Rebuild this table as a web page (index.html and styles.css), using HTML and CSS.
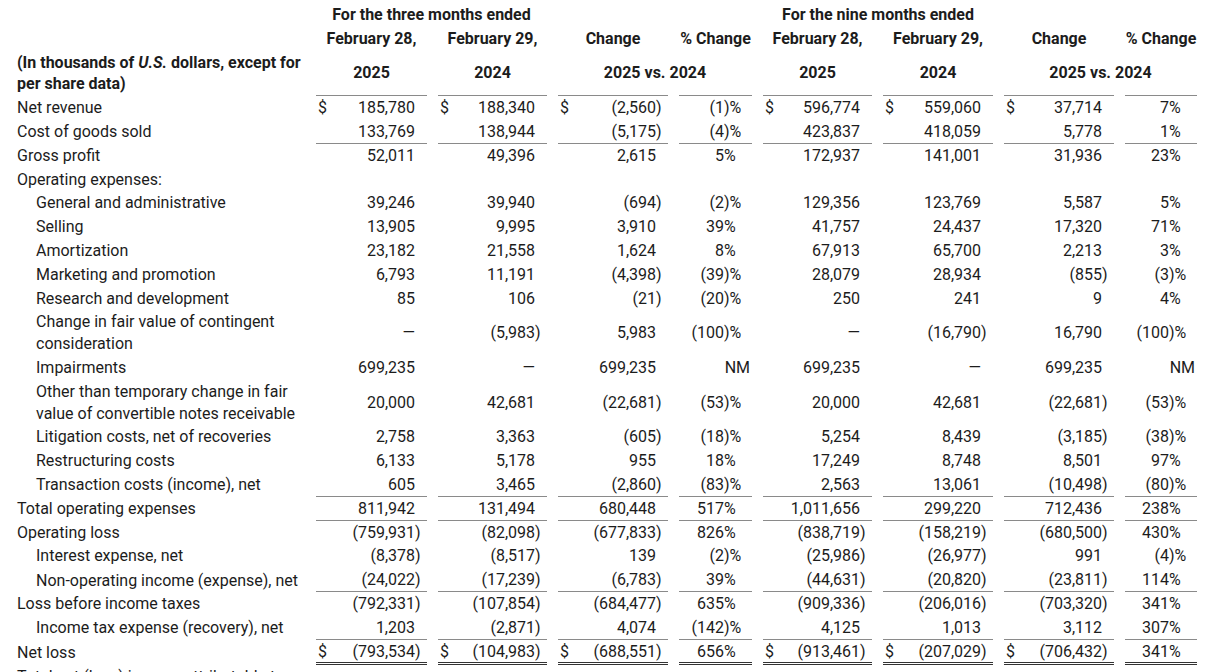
FILE: index.html
```html
<!DOCTYPE html>
<html lang="en">
<head>
  <meta charset="UTF-8">
  <title>Consolidated Statements of Loss</title>
  <link rel="stylesheet" href="styles.css">
</head>
<body>
  <table class="fin">
    <colgroup>
      <col class="c-label">
      <col class="c-val"><col class="c-val2"><col class="c-val3"><col class="c-pct">
      <col class="c-val5"><col class="c-val3"><col class="c-val3"><col class="c-pct8">
    </colgroup>
    <thead>
      <tr>
        <th></th>
        <th colspan="2">For the three months ended</th>
        <th></th><th></th>
        <th colspan="2">For the nine months ended</th>
        <th></th><th></th>
      </tr>
      <tr>
        <th></th>
        <th>February 28,</th><th>February 29,</th><th>Change</th><th>% Change</th>
        <th>February 28,</th><th>February 29,</th><th>Change</th><th>% Change</th>
      </tr>
      <tr class="yr">
        <th class="lbl">(In thousands of <i>U.S.</i> dollars, except for per share data)</th>
        <th class="ul">2025</th><th class="ul">2024</th><th colspan="2" class="ul-split">2025 vs. 2024</th>
        <th class="ul">2025</th><th class="ul">2024</th><th colspan="2" class="ul-split">2025 vs. 2024</th>
      </tr>
    </thead>
    <tbody>
      <tr>
        <td class="lbl">Net revenue</td>
        <td class="num"><span class="cur">$</span>185,780</td>
        <td class="num"><span class="cur">$</span>188,340</td>
        <td class="num"><span class="cur">$</span>(2,560<span class="cp">)</span></td>
        <td class="pct">(1<span class="sfx">)%</span></td>
        <td class="num"><span class="cur">$</span>596,774</td>
        <td class="num"><span class="cur">$</span>559,060</td>
        <td class="num"><span class="cur">$</span>37,714</td>
        <td class="pct">7<span class="sfx">%</span></td>
      </tr>
      <tr class="rule">
        <td class="lbl">Cost of goods sold</td>
        <td class="num">133,769</td>
        <td class="num">138,944</td>
        <td class="num">(5,175<span class="cp">)</span></td>
        <td class="pct">(4<span class="sfx">)%</span></td>
        <td class="num">423,837</td>
        <td class="num">418,059</td>
        <td class="num">5,778</td>
        <td class="pct">1<span class="sfx">%</span></td>
      </tr>
      <tr>
        <td class="lbl">Gross profit</td>
        <td class="num">52,011</td>
        <td class="num">49,396</td>
        <td class="num">2,615</td>
        <td class="pct">5<span class="sfx">%</span></td>
        <td class="num">172,937</td>
        <td class="num">141,001</td>
        <td class="num">31,936</td>
        <td class="pct">23<span class="sfx">%</span></td>
      </tr>
      <tr>
        <td class="lbl">Operating expenses:</td>
        <td></td><td></td><td></td><td></td><td></td><td></td><td></td><td></td>
      </tr>
      <tr>
        <td class="lbl ind">General and administrative</td>
        <td class="num">39,246</td>
        <td class="num">39,940</td>
        <td class="num">(694<span class="cp">)</span></td>
        <td class="pct">(2<span class="sfx">)%</span></td>
        <td class="num">129,356</td>
        <td class="num">123,769</td>
        <td class="num">5,587</td>
        <td class="pct">5<span class="sfx">%</span></td>
      </tr>
      <tr>
        <td class="lbl ind">Selling</td>
        <td class="num">13,905</td>
        <td class="num">9,995</td>
        <td class="num">3,910</td>
        <td class="pct">39<span class="sfx">%</span></td>
        <td class="num">41,757</td>
        <td class="num">24,437</td>
        <td class="num">17,320</td>
        <td class="pct">71<span class="sfx">%</span></td>
      </tr>
      <tr>
        <td class="lbl ind">Amortization</td>
        <td class="num">23,182</td>
        <td class="num">21,558</td>
        <td class="num">1,624</td>
        <td class="pct">8<span class="sfx">%</span></td>
        <td class="num">67,913</td>
        <td class="num">65,700</td>
        <td class="num">2,213</td>
        <td class="pct">3<span class="sfx">%</span></td>
      </tr>
      <tr>
        <td class="lbl ind">Marketing and promotion</td>
        <td class="num">6,793</td>
        <td class="num">11,191</td>
        <td class="num">(4,398<span class="cp">)</span></td>
        <td class="pct">(39<span class="sfx">)%</span></td>
        <td class="num">28,079</td>
        <td class="num">28,934</td>
        <td class="num">(855<span class="cp">)</span></td>
        <td class="pct">(3<span class="sfx">)%</span></td>
      </tr>
      <tr>
        <td class="lbl ind">Research and development</td>
        <td class="num">85</td>
        <td class="num">106</td>
        <td class="num">(21<span class="cp">)</span></td>
        <td class="pct">(20<span class="sfx">)%</span></td>
        <td class="num">250</td>
        <td class="num">241</td>
        <td class="num">9</td>
        <td class="pct">4<span class="sfx">%</span></td>
      </tr>
      <tr>
        <td class="lbl ind">Change in fair value of contingent consideration</td>
        <td class="num">&mdash;</td>
        <td class="num">(5,983<span class="cp">)</span></td>
        <td class="num">5,983</td>
        <td class="pct">(100<span class="sfx">)%</span></td>
        <td class="num">&mdash;</td>
        <td class="num">(16,790<span class="cp">)</span></td>
        <td class="num">16,790</td>
        <td class="pct">(100<span class="sfx">)%</span></td>
      </tr>
      <tr>
        <td class="lbl ind">Impairments</td>
        <td class="num">699,235</td>
        <td class="num">&mdash;</td>
        <td class="num">699,235</td>
        <td class="pct nm">NM</td>
        <td class="num">699,235</td>
        <td class="num">&mdash;</td>
        <td class="num">699,235</td>
        <td class="pct nm">NM</td>
      </tr>
      <tr>
        <td class="lbl ind">Other than temporary change in fair value of convertible notes receivable</td>
        <td class="num">20,000</td>
        <td class="num">42,681</td>
        <td class="num">(22,681<span class="cp">)</span></td>
        <td class="pct">(53<span class="sfx">)%</span></td>
        <td class="num">20,000</td>
        <td class="num">42,681</td>
        <td class="num">(22,681<span class="cp">)</span></td>
        <td class="pct">(53<span class="sfx">)%</span></td>
      </tr>
      <tr>
        <td class="lbl ind">Litigation costs, net of recoveries</td>
        <td class="num">2,758</td>
        <td class="num">3,363</td>
        <td class="num">(605<span class="cp">)</span></td>
        <td class="pct">(18<span class="sfx">)%</span></td>
        <td class="num">5,254</td>
        <td class="num">8,439</td>
        <td class="num">(3,185<span class="cp">)</span></td>
        <td class="pct">(38<span class="sfx">)%</span></td>
      </tr>
      <tr>
        <td class="lbl ind">Restructuring costs</td>
        <td class="num">6,133</td>
        <td class="num">5,178</td>
        <td class="num">955</td>
        <td class="pct">18<span class="sfx">%</span></td>
        <td class="num">17,249</td>
        <td class="num">8,748</td>
        <td class="num">8,501</td>
        <td class="pct">97<span class="sfx">%</span></td>
      </tr>
      <tr class="rule">
        <td class="lbl ind">Transaction costs (income), net</td>
        <td class="num">605</td>
        <td class="num">3,465</td>
        <td class="num">(2,860<span class="cp">)</span></td>
        <td class="pct">(83<span class="sfx">)%</span></td>
        <td class="num">2,563</td>
        <td class="num">13,061</td>
        <td class="num">(10,498<span class="cp">)</span></td>
        <td class="pct">(80<span class="sfx">)%</span></td>
      </tr>
      <tr class="rule">
        <td class="lbl">Total operating expenses</td>
        <td class="num">811,942</td>
        <td class="num">131,494</td>
        <td class="num">680,448</td>
        <td class="pct">517<span class="sfx">%</span></td>
        <td class="num">1,011,656</td>
        <td class="num">299,220</td>
        <td class="num">712,436</td>
        <td class="pct">238<span class="sfx">%</span></td>
      </tr>
      <tr>
        <td class="lbl">Operating loss</td>
        <td class="num">(759,931<span class="cp">)</span></td>
        <td class="num">(82,098<span class="cp">)</span></td>
        <td class="num">(677,833<span class="cp">)</span></td>
        <td class="pct">826<span class="sfx">%</span></td>
        <td class="num">(838,719<span class="cp">)</span></td>
        <td class="num">(158,219<span class="cp">)</span></td>
        <td class="num">(680,500<span class="cp">)</span></td>
        <td class="pct">430<span class="sfx">%</span></td>
      </tr>
      <tr>
        <td class="lbl ind">Interest expense, net</td>
        <td class="num">(8,378<span class="cp">)</span></td>
        <td class="num">(8,517<span class="cp">)</span></td>
        <td class="num">139</td>
        <td class="pct">(2<span class="sfx">)%</span></td>
        <td class="num">(25,986<span class="cp">)</span></td>
        <td class="num">(26,977<span class="cp">)</span></td>
        <td class="num">991</td>
        <td class="pct">(4<span class="sfx">)%</span></td>
      </tr>
      <tr class="rule">
        <td class="lbl ind">Non-operating income (expense), net</td>
        <td class="num">(24,022<span class="cp">)</span></td>
        <td class="num">(17,239<span class="cp">)</span></td>
        <td class="num">(6,783<span class="cp">)</span></td>
        <td class="pct">39<span class="sfx">%</span></td>
        <td class="num">(44,631<span class="cp">)</span></td>
        <td class="num">(20,820<span class="cp">)</span></td>
        <td class="num">(23,811<span class="cp">)</span></td>
        <td class="pct">114<span class="sfx">%</span></td>
      </tr>
      <tr>
        <td class="lbl">Loss before income taxes</td>
        <td class="num">(792,331<span class="cp">)</span></td>
        <td class="num">(107,854<span class="cp">)</span></td>
        <td class="num">(684,477<span class="cp">)</span></td>
        <td class="pct">635<span class="sfx">%</span></td>
        <td class="num">(909,336<span class="cp">)</span></td>
        <td class="num">(206,016<span class="cp">)</span></td>
        <td class="num">(703,320<span class="cp">)</span></td>
        <td class="pct">341<span class="sfx">%</span></td>
      </tr>
      <tr class="rule">
        <td class="lbl ind">Income tax expense (recovery), net</td>
        <td class="num">1,203</td>
        <td class="num">(2,871<span class="cp">)</span></td>
        <td class="num">4,074</td>
        <td class="pct">(142<span class="sfx">)%</span></td>
        <td class="num">4,125</td>
        <td class="num">1,013</td>
        <td class="num">3,112</td>
        <td class="pct">307<span class="sfx">%</span></td>
      </tr>
      <tr class="total">
        <td class="lbl">Net loss</td>
        <td class="num"><span class="cur">$</span>(793,534<span class="cp">)</span></td>
        <td class="num"><span class="cur">$</span>(104,983<span class="cp">)</span></td>
        <td class="num"><span class="cur">$</span>(688,551<span class="cp">)</span></td>
        <td class="pct">656<span class="sfx">%</span></td>
        <td class="num"><span class="cur">$</span>(913,461<span class="cp">)</span></td>
        <td class="num"><span class="cur">$</span>(207,029<span class="cp">)</span></td>
        <td class="num"><span class="cur">$</span>(706,432<span class="cp">)</span></td>
        <td class="pct">341<span class="sfx">%</span></td>
      </tr>
      <tr>
        <td class="lbl">Total net (loss) income attributable to:</td>
        <td></td><td></td><td></td><td></td><td></td><td></td><td></td><td></td>
      </tr>
    </tbody>
  </table>
</body>
</html>
```

FILE: styles.css
```css
body {
  margin: 0;
  font-family: Roboto, "Liberation Sans", Arial, sans-serif;
  font-size: 16px;
  color: #1c1c1c;
  background: #fff;
}
.fin {
  border-collapse: separate;
  border-spacing: 11px 0;
  table-layout: fixed;
  width: 1202px;
  margin: 3px 0 0 6px;
}
.c-label { width: 288px; }
.c-val { width: 111px; }
.c-val2 { width: 109px; }
.c-val3 { width: 110px; }
.c-val5 { width: 109px; }
.c-pct { width: 73px; }
.c-pct8 { width: 72px; }

.fin th,
.fin td {
  padding: 1px 0;
  line-height: 21.8px;
  white-space: nowrap;
  vertical-align: middle;
}
.fin th {
  font-weight: 700;
  text-align: center;
}
.fin .lbl {
  text-align: left;
  white-space: normal;
}
.fin .ind {
  padding-left: 19px;
}
.ul {
  border-bottom: 1px solid #8a8a8a;
}
.ul-split {
  background-image: linear-gradient(to right, #8a8a8a 110px, transparent 110px, transparent 121px, #8a8a8a 121px);
  background-size: 100% 1px;
  background-position: left bottom;
  background-repeat: no-repeat;
}

.num {
  text-align: right;
  padding-right: 12px !important;
}
.cur {
  float: left;
  padding-left: 2px;
}
.cp {
  display: inline-block;
  width: 0;
}
.pct {
  text-align: right;
  padding-right: 10px !important;
}
.sfx {
  display: inline-block;
  width: 18px;
  text-align: left;
}
.pct.nm {
  padding-right: 2px !important;
}

.fin .rule td {
  padding-bottom: 0;
}
.rule td:not(.lbl) {
  border-bottom: 1px solid #8a8a8a;
}
.fin .total td {
  padding-bottom: 0;
}
.total td:not(.lbl) {
  border-bottom: 3px double #333;
}
```
